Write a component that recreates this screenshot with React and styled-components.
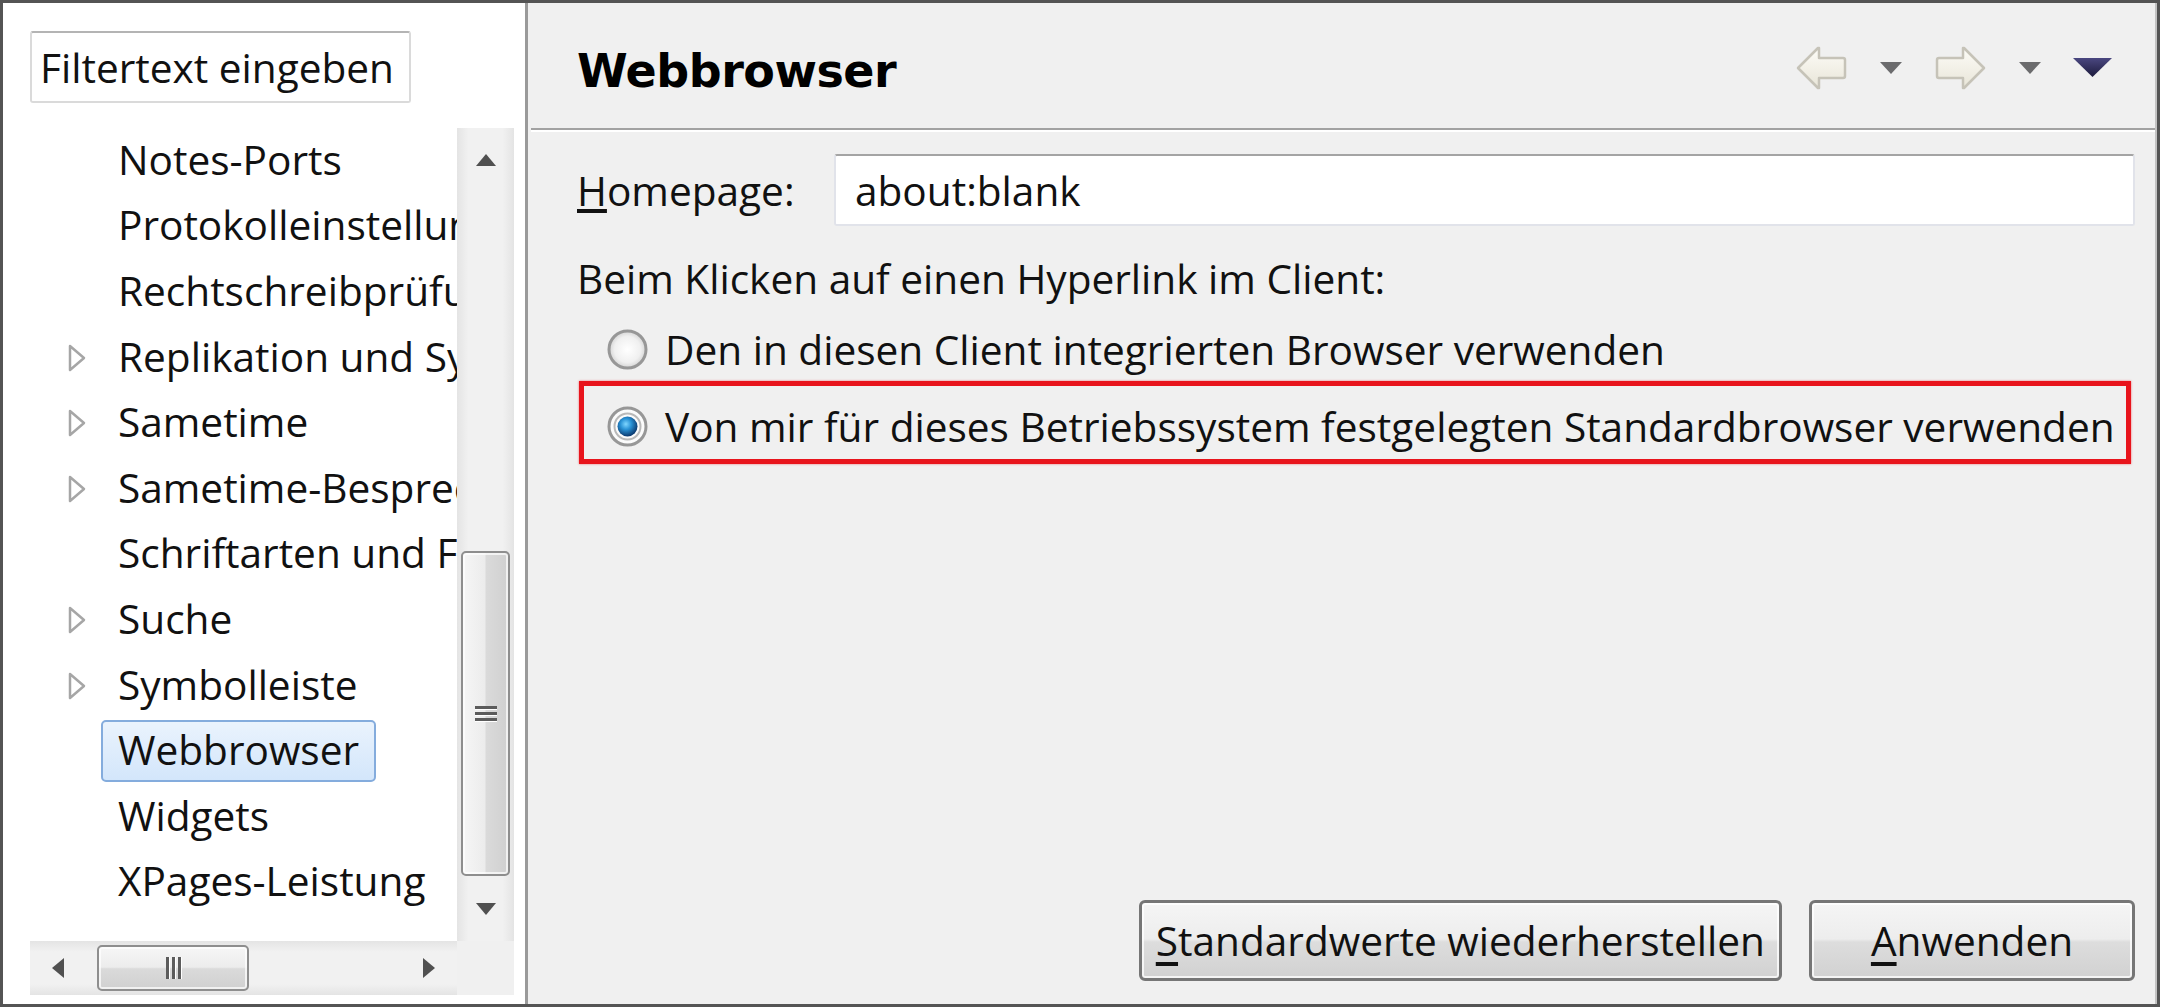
import React from 'react';
import styled, { createGlobalStyle } from 'styled-components';

const GlobalStyle = createGlobalStyle`
  html, body {
    margin: 0;
    padding: 0;
    background: #ffffff;
  }
  body {
    font-family: "Open Sans", "Noto Sans", sans-serif;
    color: #111111;
  }
  * {
    box-sizing: border-box;
  }
`;

const Styles = {
  Frame: styled.div`
    width: 2160px;
    height: 1007px;
    display: flex;
    border: 3px solid #545454;
    overflow: hidden;
    font-size: 40.6px;
  `,
  Left: styled.div`
    width: 525px;
    flex-shrink: 0;
    background: #ffffff;
    border-right: 3px solid #9a9a9a;
    padding: 28px 11px 0 27px;
    display: flex;
    flex-direction: column;
  `,
  Filter: styled.div`
    width: 381px;
    height: 72px;
    margin-bottom: 25px;
    border: 2px solid #dadada;
    border-top-color: #b4b4b4;
    border-radius: 3px;
    padding-left: 8px;
    display: flex;
    align-items: center;
    white-space: nowrap;
    overflow: hidden;
  `,
  TreeGrid: styled.div`
    display: grid;
    grid-template-columns: 427px 57px;
    grid-template-rows: 813px 54px;
  `,
  Viewport: styled.div`
    overflow: hidden;
  `,
  Row: styled.div`
    height: 65.6px;
    display: flex;
    align-items: center;
    white-space: nowrap;
  `,
  Toggle: styled.div`
    width: 35px;
    margin-left: 38px;
    flex-shrink: 0;
    display: flex;
    align-items: center;
  `,
  Label: styled.span`
    height: 62px;
    line-height: 56px;
    padding: 0 15px;
    border: 2px solid ${(p) => (p.$selected ? '#84acdd' : 'transparent')};
    border-radius: 5px;
    background: ${(p) =>
      p.$selected ? 'linear-gradient(#eaf3fd, #d3e6fb)' : 'transparent'};
    margin-left: -2px;
  `,
  VScroll: styled.div`
    display: flex;
    flex-direction: column;
    background: linear-gradient(90deg, #e4e4e4, #f1f1f1 20%, #f1f1f1 80%, #e4e4e4);
  `,
  VArrow: styled.div`
    height: 64px;
    flex-shrink: 0;
    display: flex;
    align-items: center;
    justify-content: center;
  `,
  VTrack: styled.div`
    flex: 1;
    padding: 0 4px;
  `,
  VThumb: styled.div`
    border: 2px solid #8e8e8e;
    border-radius: 5px;
    background: linear-gradient(90deg, #f6f6f6 0%, #ececec 48%, #dadada 52%, #d0d0d0 100%);
    box-shadow: inset 0 0 0 2px rgba(255, 255, 255, 0.7);
    display: flex;
    align-items: center;
    justify-content: center;
  `,
  HScroll: styled.div`
    display: flex;
    background: linear-gradient(#e4e4e4, #f1f1f1 20%, #f1f1f1 80%, #e4e4e4);
  `,
  HArrow: styled.div`
    width: 56px;
    flex-shrink: 0;
    display: flex;
    align-items: center;
    justify-content: center;
  `,
  HTrack: styled.div`
    flex: 1;
    padding: 4px 0;
    display: flex;
  `,
  HThumb: styled.div`
    border: 2px solid #8e8e8e;
    border-radius: 5px;
    background: linear-gradient(#f6f6f6 0%, #ececec 48%, #dadada 52%, #d0d0d0 100%);
    box-shadow: inset 0 0 0 2px rgba(255, 255, 255, 0.7);
    display: flex;
    align-items: center;
    justify-content: center;
  `,
  Grip: styled.div`
    display: flex;
    flex-direction: ${(p) => (p.$vertical ? 'column' : 'row')};
    gap: 3px;
    & > span {
      display: block;
      background: #5c5c5c;
      box-shadow: ${(p) => (p.$vertical ? '0 1px 0 #fff' : '1px 0 0 #fff')};
      width: ${(p) => (p.$vertical ? '22px' : '3px')};
      height: ${(p) => (p.$vertical ? '3px' : '22px')};
    }
  `,
  Corner: styled.div`
    background: #f0f0f0;
  `,
  Right: styled.div`
    flex: 1;
    background: #f0f0f0;
    border-right: 2px solid #c2c2c2;
    display: flex;
    flex-direction: column;
  `,
  Header: styled.div`
    height: 125px;
    flex-shrink: 0;
    display: flex;
    align-items: center;
    justify-content: space-between;
    padding: 10px 43px 0 49px;
  `,
  Title: styled.h1`
    margin: 0;
    font-family: "DejaVu Sans", "Liberation Sans", sans-serif;
    font-weight: bold;
    font-size: 46px;
    letter-spacing: -0.5px;
    color: #000;
  `,
  Toolbar: styled.div`
    display: flex;
    align-items: center;
    gap: 32px;
    margin-top: -6px;
  `,
  Divider: styled.div`
    margin-left: 3px;
    height: 0;
    border-top: 2px solid #a2a2a2;
    border-bottom: 2px solid #ffffff;
  `,
  Content: styled.div`
    flex: 1;
    display: flex;
    flex-direction: column;
    padding: 22px 20px 23px 49px;
  `,
  HomeRow: styled.div`
    display: flex;
    align-items: center;
    height: 72px;
  `,
  FieldLabel: styled.label`
    width: 257px;
    flex-shrink: 0;
  `,
  TextBox: styled.div`
    flex: 1;
    height: 72px;
    background: #ffffff;
    border: 2px solid #e1e3ea;
    border-top-color: #a4a4a4;
    border-radius: 3px;
    padding-left: 19px;
    display: flex;
    align-items: center;
  `,
  Text: styled.div`
    line-height: 56px;
    margin-top: 25px;
  `,
  RadioRow: styled.div`
    display: flex;
    align-items: center;
    gap: 17px;
    height: 56px;
    padding-left: ${(p) => p.$indent}px;
    margin-top: ${(p) => p.$top || 0}px;
    white-space: nowrap;
  `,
  Highlight: styled.div`
    margin: 4px 4px 0 2px;
    border: 5px solid #e8141c;
    box-shadow: 0 0 2px rgba(232, 20, 28, 0.6);
    padding: 12px 0 5px 23px;
  `,
  Buttons: styled.div`
    margin-top: auto;
    display: flex;
    justify-content: flex-end;
    gap: 27px;
  `,
  Button: styled.button`
    height: 81px;
    min-width: ${(p) => p.$min || 0}px;
    padding: 0 14px;
    font-family: "Open Sans", "Noto Sans", sans-serif;
    font-size: 40.6px;
    color: #111111;
    border: 3px solid #767676;
    border-radius: 6px;
    background: linear-gradient(#f5f5f5 0%, #ededed 48%, #dddddd 52%, #d1d1d1 100%);
    box-shadow: inset 0 0 0 2px rgba(255, 255, 255, 0.75);
    u {
      text-underline-offset: 6px;
    }
  `,
};

const treeItems = [
  { label: 'Notes-Ports' },
  { label: 'Protokolleinstellungen' },
  { label: 'Rechtschreibprüfung' },
  { label: 'Replikation und Synchronisation', expandable: true },
  { label: 'Sametime', expandable: true },
  { label: 'Sametime-Besprechungen', expandable: true },
  { label: 'Schriftarten und Farben' },
  { label: 'Suche', expandable: true },
  { label: 'Symbolleiste', expandable: true },
  { label: 'Webbrowser', selected: true },
  { label: 'Widgets' },
  { label: 'XPages-Leistung' },
];

// icons
const Expander = () => (
  <svg width="18" height="28" viewBox="0 0 18 28">
    <path d="M2 2 L16 14 L2 26 Z" fill="#fff" stroke="#a6a6a6" strokeWidth="2.5" strokeLinejoin="round" />
  </svg>
);

const Glyph = ({ dir }) => {
  const paths = {
    up: 'M1 13 L11 1 L21 13 Z',
    down: 'M1 1 L11 13 L21 1 Z',
    left: 'M13 1 L1 11 L13 21 Z',
    right: 'M1 1 L13 11 L1 21 Z',
  };
  const vertical = dir === 'up' || dir === 'down';
  return (
    <svg width={vertical ? 22 : 14} height={vertical ? 14 : 22} viewBox={vertical ? '0 0 22 14' : '0 0 14 22'}>
      <path d={paths[dir]} fill="#505050" />
    </svg>
  );
};

const NavArrow = ({ flip }) => (
  <svg width="53" height="48" viewBox="0 0 53 48" style={flip ? { transform: 'scaleX(-1)' } : undefined}>
    <defs>
      <linearGradient id="navFill" x1="0" y1="0" x2="0" y2="1">
        <stop offset="0" stopColor="#fdfcf7" />
        <stop offset="1" stopColor="#e8e5d8" />
      </linearGradient>
    </defs>
    <path
      d="M3 24 L23 4 L24 4 L24 14 L48 14 Q50 14 50 16 L50 32 Q50 34 48 34 L24 34 L24 44 L23 44 Z"
      fill="url(#navFill)"
      stroke="#c6c3b8"
      strokeWidth="2.5"
      strokeLinejoin="round"
    />
  </svg>
);

const SmallDrop = () => (
  <svg width="22" height="12" viewBox="0 0 22 12">
    <path d="M0 0 H22 L11 12 Z" fill="#6b6b6d" />
  </svg>
);

const ViewMenu = () => (
  <svg width="39" height="19" viewBox="0 0 39 19">
    <defs>
      <linearGradient id="menuFill" x1="0" y1="0" x2="0" y2="1">
        <stop offset="0" stopColor="#4a4780" />
        <stop offset="1" stopColor="#1c1a3c" />
      </linearGradient>
    </defs>
    <path d="M0 0 H39 L19.5 19 Z" fill="url(#menuFill)" />
  </svg>
);

const Radio = ({ checked }) => (
  <svg width="41" height="41" viewBox="0 0 41 41">
    <defs>
      <radialGradient id="radioBody" cx="0.5" cy="0.5" r="0.5">
        <stop offset="0" stopColor="#ffffff" />
        <stop offset="0.7" stopColor="#f0f0f0" />
        <stop offset="1" stopColor="#d4d4d4" />
      </radialGradient>
      <radialGradient id="radioDot" cx="0.42" cy="0.38" r="0.6">
        <stop offset="0" stopColor="#7fd6ff" />
        <stop offset="0.45" stopColor="#2a93d6" />
        <stop offset="1" stopColor="#0d3d73" />
      </radialGradient>
    </defs>
    <circle cx="20.5" cy="20.5" r="18.5" fill={checked ? '#fbfbfb' : 'url(#radioBody)'} stroke="#979797" strokeWidth="3" />
    {checked && (
      <>
        <circle cx="20.5" cy="20.5" r="13" fill="none" stroke="#b9b9b9" strokeWidth="2" />
        <circle cx="20.5" cy="20.5" r="10" fill="url(#radioDot)" />
      </>
    )}
  </svg>
);

const Tree = () => (
  <Styles.Viewport>
    {treeItems.map((item) => (
      <Styles.Row key={item.label}>
        <Styles.Toggle>{item.expandable && <Expander />}</Styles.Toggle>
        <Styles.Label $selected={item.selected}>{item.label}</Styles.Label>
      </Styles.Row>
    ))}
  </Styles.Viewport>
);

const App = () => {
  return (
    <>
      <GlobalStyle />
      <Styles.Frame>
        <Styles.Left>
          <Styles.Filter>Filtertext eingeben</Styles.Filter>
          <Styles.TreeGrid>
            <Tree />
            <Styles.VScroll>
              <Styles.VArrow><Glyph dir="up" /></Styles.VArrow>
              <Styles.VTrack>
                <Styles.VThumb style={{ marginTop: 359, height: 325 }}>
                  <Styles.Grip $vertical><span /><span /><span /></Styles.Grip>
                </Styles.VThumb>
              </Styles.VTrack>
              <Styles.VArrow><Glyph dir="down" /></Styles.VArrow>
            </Styles.VScroll>
            <Styles.HScroll>
              <Styles.HArrow><Glyph dir="left" /></Styles.HArrow>
              <Styles.HTrack>
                <Styles.HThumb style={{ marginLeft: 11, width: 152 }}>
                  <Styles.Grip><span /><span /><span /></Styles.Grip>
                </Styles.HThumb>
              </Styles.HTrack>
              <Styles.HArrow><Glyph dir="right" /></Styles.HArrow>
            </Styles.HScroll>
            <Styles.Corner />
          </Styles.TreeGrid>
        </Styles.Left>

        <Styles.Right>
          <Styles.Header>
            <Styles.Title>Webbrowser</Styles.Title>
            <Styles.Toolbar>
              <NavArrow />
              <SmallDrop />
              <NavArrow flip />
              <SmallDrop />
              <ViewMenu />
            </Styles.Toolbar>
          </Styles.Header>
          <Styles.Divider />
          <Styles.Content>
            <Styles.HomeRow>
              <Styles.FieldLabel><u>H</u>omepage:</Styles.FieldLabel>
              <Styles.TextBox>about:blank</Styles.TextBox>
            </Styles.HomeRow>
            <Styles.Text>Beim Klicken auf einen Hyperlink im Client:</Styles.Text>
            <Styles.RadioRow $indent={30} $top={14}>
              <Radio />
              Den in diesen Client integrierten Browser verwenden
            </Styles.RadioRow>
            <Styles.Highlight>
              <Styles.RadioRow $indent={0}>
                <Radio checked />
                Von mir für dieses Betriebssystem festgelegten Standardbrowser verwenden
              </Styles.RadioRow>
            </Styles.Highlight>
            <Styles.Buttons>
              <Styles.Button><u>S</u>tandardwerte wiederherstellen</Styles.Button>
              <Styles.Button $min={326}><u>A</u>nwenden</Styles.Button>
            </Styles.Buttons>
          </Styles.Content>
        </Styles.Right>
      </Styles.Frame>
    </>
  );
};

export default App;
